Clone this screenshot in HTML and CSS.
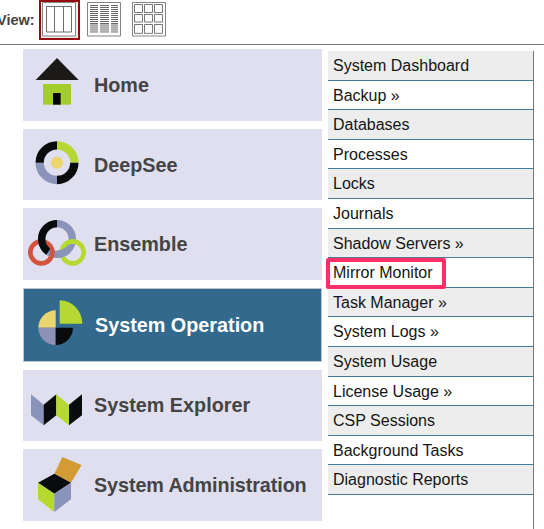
FILE: index.html
```html
<!DOCTYPE html>
<html lang="en">
<head>
<meta charset="utf-8">
<title>Management Portal</title>
<link rel="stylesheet" href="styles.css">
</head>
<body>
<header class="toolbar">
  <span class="view-label">View:</span>
  <svg class="view selected" viewBox="117 0 123 120">
    <rect x="120" y="3" width="117" height="114" fill="#fff" stroke="#960a0f" stroke-width="6"/>
    <path d="M231 6V111H126" fill="none" stroke="#ddd" stroke-width="3"/>
    <path d="M127.500 7.500H226.500V108H127.500Z" fill="none" stroke="#858585" stroke-width="3"/>
    <path d="M139.500 19.500H214.500V96H139.500ZM163.500 19V96M190.500 19V96" fill="none" stroke="#6c6c6c" stroke-width="3"/>
  </svg>
  <svg class="view" viewBox="258 0 108 120">
    <path d="M262.500 7.500H361.500V108H262.500Z" fill="#fff" stroke="#858585" stroke-width="3"/>
    <path d="M270 70H294V99H270ZM300 70H327V99H300ZM333 70H354V99H333Z" fill="#bbb"/>
    <path d="M270 16.500H294M300 16.500H327M333 16.500H354M270 22.500H294M300 22.500H327M333 22.500H354M270 28.500H294M300 28.500H327M333 28.500H354M270 34.500H294M300 34.500H327M333 34.500H354M270 40.500H294M300 40.500H327M333 40.500H354M270 46.500H294M300 46.500H327M333 46.500H354M270 52.500H294M300 52.500H327M333 52.500H354M270 58.500H294M300 58.500H327M333 58.500H354M270 64.500H294M300 64.500H327M333 64.500H354M270 70.500H294M300 70.500H327M333 70.500H354" stroke="#666" stroke-width="3"/>
    <path d="M270 76.500H294M300 76.500H327M333 76.500H354M270 82.500H294M300 82.500H327M333 82.500H354M270 88.500H294M300 88.500H327M333 88.500H354M270 94.500H294M300 94.500H327M333 94.500H354" stroke="#aaa" stroke-width="3"/>
  </svg>
  <svg class="view" viewBox="393 0 108 120">
    <path d="M397.500 7.500H496.500V108H397.500Z" fill="#fff" stroke="#858585" stroke-width="3"/>
    <path d="M403.500 13.500H427.500V37.500H403.500ZM433.500 13.500H457.500V37.500H433.500ZM463.500 13.500H487.500V37.500H463.500ZM403.500 43.500H427.500V66H403.500ZM433.500 43.500H457.500V66H433.500ZM463.500 43.500H487.500V66H463.500ZM403.500 73.500H427.500V100H403.500ZM433.500 73.500H457.500V100H433.500ZM463.500 73.500H487.500V100H463.500Z" fill="none" stroke="#777" stroke-width="3"/>
  </svg>
</header>
<main class="content">
  <nav class="tiles">
    <a class="tile"><svg class="icon" viewBox="21 14 210 213">
      <path d="M123 41L188 107H59Z" fill="#1b1a18"/><path d="M81 119H165V181H81Z" fill="#a2cd2d"/><path d="M111 146H134V181H111Z" fill="#050505"/>
    </svg><span>Home</span></a>
    <a class="tile"><svg class="icon" viewBox="21 14 210 213">
      <g fill="none" stroke-width="25"><path d="M123 63A52 52 0 0 1 175 115" stroke="#b5d832"/><path d="M175 115A52 52 0 0 1 123 167" stroke="#090b0d"/><path d="M123 167A52 52 0 0 1 71 115" stroke="#8a93b9"/><path d="M71 115A52 52 0 0 1 123 63" stroke="#090b0d"/></g><circle cx="123" cy="115" r="18" fill="#ecd56e"/>
    </svg><span>DeepSee</span></a>
    <a class="tile"><svg class="icon" viewBox="21 12 210 213">
      <g fill="none">
        <circle cx="76" cy="142" r="33" stroke="#d4533f" stroke-width="14"/>
        <circle cx="123" cy="102" r="46" stroke="#8a93b9" stroke-width="22"/>
        <path d="M123 56A46 46 0 0 0 97 140" stroke="#090b0d" stroke-width="22"/>
        <path d="M107 131A33 33 0 0 1 92 171" stroke="#d4533f" stroke-width="14"/>
        <circle cx="170" cy="142" r="33" stroke="#b5d832" stroke-width="14"/>
        <path d="M155 135A46 46 0 0 1 123 148" stroke="#8a93b9" stroke-width="22"/>
      </g>
    </svg><span>Ensemble</span></a>
    <a class="tile active"><svg class="icon" viewBox="21 14 210 213">
      <path d="M119 130H67A52 52 0 0 1 119 78Z" fill="#ecd56e"/><path d="M119 130V182A52 52 0 0 1 67 130Z" fill="#8d91b7"/><path d="M119 130H171A52 52 0 0 1 119 182Z" fill="#090b0d"/><path d="M131 118V48A68 70 0 0 1 199 118Z" fill="#b5d832"/>
    </svg><span>System Operation</span></a>
    <a class="tile"><svg class="icon" viewBox="21 17 210 213">
      <path d="M45 90L83 121V183L45 153Z" fill="#8a93b9"/><path d="M83 121L121 90V153L83 183Z" fill="#090b0d"/><path d="M121 90L159 121V183L121 153Z" fill="#b5d832"/><path d="M159 121L198 90V153L159 183Z" fill="#090b0d"/>
    </svg><span>System Explorer</span></a>
    <a class="tile"><svg class="icon" viewBox="21 15 210 213">
      <path d="M115 86L139 36L197 60L165 113Z" fill="#d39b33"/><path d="M66 113L115 86L165 113L115 146Z" fill="#090b0d"/><path d="M66 113L115 146V201L66 163Z" fill="#b5d832"/><path d="M165 113L115 146V201L165 163Z" fill="#8a93b9"/>
    </svg><span class="long">System Administration</span></a>
  </nav>
  <nav class="menu">
    <a>System Dashboard</a>
    <a>Backup »</a>
    <a>Databases</a>
    <a>Processes</a>
    <a>Locks</a>
    <a>Journals</a>
    <a>Shadow Servers »</a>
    <a class="marked">Mirror Monitor</a>
    <a>Task Manager »</a>
    <a>System Logs »</a>
    <a>System Usage</a>
    <a>License Usage »</a>
    <a>CSP Sessions</a>
    <a>Background Tasks</a>
    <a>Diagnostic Reports</a>
  </nav>
</main>
</body>
</html>
```
FILE: styles.css
```css
*, *::after { box-sizing: border-box; }
body {
  margin: 0;
  width: 544px;
  height: 529px;
  overflow: hidden;
  background: #fff;
  font-family: "Liberation Sans", Arial, sans-serif;
}
.toolbar {
  display: flex;
  height: 45px;
  border-bottom: 1px solid #777;
}
.view-label {
  width: 42px;
  margin-left: -3px;
  line-height: 40px;
  font-size: 14.500px;
  font-weight: bold;
  color: #444;
  white-space: nowrap;
}
.view { width: 36px; height: 40px; margin-right: 9px; flex: none; }
.view.selected { width: 41px; margin-right: 6px; }
.content { display: flex; align-items: flex-start; height: 484px; }
.tiles {
  display: flex;
  flex-direction: column;
  gap: 8px;
  width: 299px;
  margin: 4px 0 0 23px;
}
.tile {
  display: flex;
  align-items: center;
  height: 71.700px;
  background: #e0dfef;
  color: #444;
  font-size: 19.800px;
  font-weight: bold;
  white-space: nowrap;
}
.tile span { padding-top: 1px; }
.tile .long { letter-spacing: -0.100px; }
.icon { width: 70px; height: 71px; margin-right: 1px; flex: none; }
.tile.active {
  height: 73.500px;
  background: #32698d;
  border: 1px solid #bcc5d0;
  color: #fff;
}
.tile.active .icon { margin-left: -1px; margin-right: 2px; }
.menu {
  width: 206px;
  height: 478px;
  margin: 6px 0 0 6px;
  border-right: 1px solid #777;
}
.menu a {
  position: relative;
  display: block;
  height: 29.600px;
  padding-left: 5px;
  line-height: 29px;
  font-size: 16px;
  color: #151515;
  border-bottom: 1px solid #477c9c;
  white-space: nowrap;
}
.menu a:nth-child(odd) { background: #ededed; }
.menu .marked::after {
  content: "";
  position: absolute;
  left: -2px;
  top: 0;
  width: 120px;
  height: 31px;
  border: 4px solid #fb3069;
  border-radius: 2px;
  z-index: 1;
}
```
